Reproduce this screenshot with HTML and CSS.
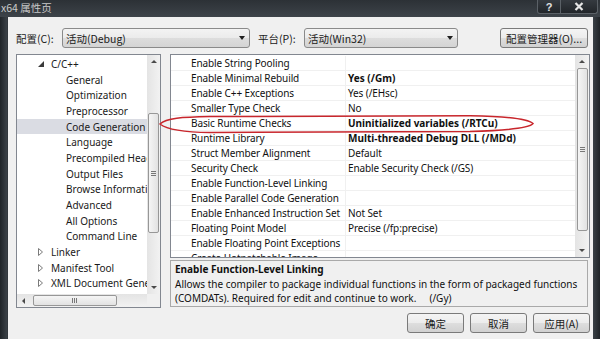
FILE: index.html
```html
<!DOCTYPE html>
<html lang="zh-CN">
<head>
<meta charset="utf-8">
<title>x64 属性页</title>
<link rel="stylesheet" href="styles.css">
</head>
<body>
<div class="frame">
  <div class="titlebar">
    <span class="title">x64 属性页</span>
    <div class="caption-btns">
      <span class="cbtn help">?</span>
      <span class="cbtn close"><svg width="10" height="9" viewBox="0 0 10 9"><path d="M1.5 1 L8.5 8 M8.5 1 L1.5 8" stroke="#e6e6e6" stroke-width="2.2"/></svg></span>
    </div>
  </div>
  <div class="client">
    <div class="toolbar">
      <span class="lbl lbl-config">配置(C):</span>
      <div class="combo combo-config"><span class="combo-text">活动(Debug)</span><i class="drop"></i></div>
      <span class="lbl lbl-platform">平台(P):</span>
      <div class="combo combo-platform"><span class="combo-text">活动(Win32)</span><i class="drop"></i></div>
      <button class="btn btn-manager">配置管理器(O)...</button>
    </div>

    <div class="main">
      <div class="tree">
        <div class="tree-items">
          <div class="node"><span class="twisty"><svg width="6" height="6" viewBox="0 0 6 6"><path d="M6 0 L6 6 L0 6 Z" fill="#3a3a3a"/></svg></span>C/C++</div>
          <div class="node child">General</div>
          <div class="node child">Optimization</div>
          <div class="node child">Preprocessor</div>
          <div class="node child selected">Code Generation</div>
          <div class="node child">Language</div>
          <div class="node child">Precompiled Headers</div>
          <div class="node child">Output Files</div>
          <div class="node child">Browse Information</div>
          <div class="node child">Advanced</div>
          <div class="node child">All Options</div>
          <div class="node child">Command Line</div>
          <div class="node"><span class="twisty"><svg width="5" height="8" viewBox="0 0 5 8"><path d="M0.5 0.5 L4.5 4 L0.5 7.5 Z" fill="none" stroke="#7a7a7a" stroke-width="1"/></svg></span>Linker</div>
          <div class="node"><span class="twisty"><svg width="5" height="8" viewBox="0 0 5 8"><path d="M0.5 0.5 L4.5 4 L0.5 7.5 Z" fill="none" stroke="#7a7a7a" stroke-width="1"/></svg></span>Manifest Tool</div>
          <div class="node"><span class="twisty"><svg width="5" height="8" viewBox="0 0 5 8"><path d="M0.5 0.5 L4.5 4 L0.5 7.5 Z" fill="none" stroke="#7a7a7a" stroke-width="1"/></svg></span>XML Document Generator</div>
        </div>
        <div class="vscroll tree-vscroll">
          <span class="sarrow up"></span>
          <span class="thumb vthumb tree-vthumb"><span class="grip-h"></span></span>
          <span class="sfill"></span>
          <span class="sarrow down"></span>
        </div>
        <div class="hscroll">
          <span class="sarrow left"></span>
          <span class="thumb hthumb"><span class="grip-v"></span></span>
          <span class="sfill"></span>
          <span class="sarrow right"></span>
        </div>
        <div class="corner"></div>
      </div>

      <div class="right">
        <div class="grid">
          <div class="rows">
            <div class="row"><span class="name">Enable String Pooling</span><span class="value"></span></div>
            <div class="row"><span class="name">Enable Minimal Rebuild</span><span class="value bold">Yes (/Gm)</span></div>
            <div class="row"><span class="name">Enable C++ Exceptions</span><span class="value">Yes (/EHsc)</span></div>
            <div class="row"><span class="name">Smaller Type Check</span><span class="value">No</span></div>
            <div class="row"><span class="name">Basic Runtime Checks</span><span class="value bold">Uninitialized variables (/RTCu)</span></div>
            <div class="row"><span class="name">Runtime Library</span><span class="value bold">Multi-threaded Debug DLL (/MDd)</span></div>
            <div class="row"><span class="name">Struct Member Alignment</span><span class="value">Default</span></div>
            <div class="row"><span class="name">Security Check</span><span class="value">Enable Security Check (/GS)</span></div>
            <div class="row"><span class="name">Enable Function-Level Linking</span><span class="value"></span></div>
            <div class="row"><span class="name">Enable Parallel Code Generation</span><span class="value"></span></div>
            <div class="row"><span class="name">Enable Enhanced Instruction Set</span><span class="value">Not Set</span></div>
            <div class="row"><span class="name">Floating Point Model</span><span class="value">Precise (/fp:precise)</span></div>
            <div class="row"><span class="name">Enable Floating Point Exceptions</span><span class="value"></span></div>
            <div class="row"><span class="name">Create Hotpatchable Image</span><span class="value"></span></div>
          </div>
          <div class="vscroll grid-vscroll">
            <span class="sarrow up"></span>
            <span class="thumb vthumb grid-vthumb"><span class="grip-h"></span></span>
            <span class="sfill"></span>
            <span class="sarrow down"></span>
          </div>
        </div>
        <div class="desc">
          <div class="desc-title">Enable Function-Level Linking</div>
          <div class="desc-text">Allows the compiler to package individual functions in the form of packaged functions<br>(COMDATs). Required for edit and continue to work.&nbsp;&nbsp;&nbsp;&nbsp;&nbsp;(/Gy)</div>
        </div>
      </div>
    </div>

    <div class="footer">
      <button class="btn btn-dlg">确定</button>
      <button class="btn btn-dlg">取消</button>
      <button class="btn btn-dlg">应用(A)</button>
    </div>
  </div>
</div>
<svg class="annot" width="600" height="339" viewBox="0 0 600 339">
  <path d="M160 124 C166 118 182 117 210 116.5 L470 115.8 C506 116.3 528 119 533 123.5 C529 128.5 505 130.5 470 131.5 L210 132.5 C184 132.3 167 129.5 160 124 Z" fill="none" stroke="#c8262c" stroke-width="1.5"/>
</svg>
</body>
</html>
```

FILE: styles.css
```css
html, body {
  margin: 0;
  padding: 0;
}
body {
  width: 600px;
  height: 339px;
  overflow: hidden;
  position: relative;
  background: #24292e;
  font-family: "Noto Sans", "Noto Sans CJK SC", sans-serif;
  font-size: 10px;
  color: #111;
}
.frame {
  height: 339px;
  box-sizing: border-box;
  padding: 0 7px 0 8px;
  display: flex;
  flex-direction: column;
  background: linear-gradient(to right, #1f2428 0, #3b4147 7px, #2a2f34 8px, #2a2f34 592px, #3a4046 593px, #1f2327 600px);
}
.titlebar {
  height: 17px;
  margin: 0 -7px 0 -8px;
  display: flex;
  justify-content: space-between;
  align-items: flex-start;
  background: linear-gradient(to bottom, #2c3136, #3d4349);
}
.title {
  padding: 1px 0 0 1px;
  font-family: "Noto Sans CJK SC", sans-serif;
  font-size: 10.5px;
  line-height: 14px;
  color: #c9c9c9;
}
.caption-btns {
  display: flex;
  margin-right: 2px;
}
.cbtn {
  height: 13px;
  display: flex;
  align-items: center;
  justify-content: center;
  border: 1px solid #5b6167;
  border-top: none;
  background: linear-gradient(to bottom, #353a40, #22262a);
  color: #e0e0e0;
  font-family: "Liberation Sans", sans-serif;
  font-weight: bold;
  font-size: 11px;
}
.help {
  width: 22px;
  border-radius: 0 0 0 3px;
}
.close {
  width: 36px;
  border-left: none;
  border-radius: 0 0 3px 0;
}
.client {
  flex: 1;
  min-height: 0;
  background: #f0f0f0;
  padding: 11px 3px 0 8px;
  display: flex;
  flex-direction: column;
}
.toolbar {
  height: 20px;
  display: flex;
  align-items: center;
}
.lbl {
  font-family: "Noto Sans CJK SC", sans-serif;
  font-size: 10.5px;
  color: #1a1a1a;
  width: 46px;
}
.lbl-platform {
  margin-left: 8px;
}
.combo {
  height: 20px;
  box-sizing: border-box;
  border: 1px solid #8a8a8a;
  border-radius: 3px;
  background: linear-gradient(to bottom, #f3f3f3 0, #ebebeb 50%, #dddddd 51%, #d4d4d4 100%);
  display: flex;
  align-items: center;
  justify-content: space-between;
  padding: 0 4px 0 3px;
}
.combo-config { width: 188px; }
.combo-platform { width: 154px; }
.combo-text {
  font-family: "Noto Sans CJK SC", sans-serif;
  font-size: 10.5px;
  color: #1a1a1a;
}
.drop {
  width: 0;
  height: 0;
  border-left: 3.5px solid transparent;
  border-right: 3.5px solid transparent;
  border-top: 4px solid #202020;
}
.btn {
  height: 20px;
  box-sizing: border-box;
  border: 1px solid #7a7a7a;
  border-radius: 3px;
  background: linear-gradient(to bottom, #f4f4f4 0, #ececec 50%, #dedede 51%, #d1d1d1 100%);
  font-family: "Noto Sans CJK SC", sans-serif;
  font-size: 10.5px;
  color: #1a1a1a;
  padding: 0;
  display: flex;
  align-items: center;
  justify-content: center;
}
.btn-manager {
  margin-left: 42px;
  width: 88px;
}
.main {
  margin-top: 6px;
  height: 254px;
  display: flex;
  gap: 9px;
}
.tree {
  width: 145px;
  box-sizing: border-box;
  border: 1px solid #828790;
  background: #fff;
  display: grid;
  grid-template-columns: minmax(0, 1fr) 13px;
  grid-template-rows: minmax(0, 1fr) 13px;
}
.tree-items {
  overflow: hidden;
  padding-top: 1px;
  white-space: nowrap;
}
.node {
  height: 15.7px;
  display: flex;
  align-items: center;
  padding-left: 21px;
  color: #1a1a1a;
}
.node.child {
  padding-left: 49px;
}
.node.selected {
  background: #dadce3;
}
.twisty {
  flex: none;
  width: 13px;
  display: flex;
  align-items: center;
}
.vscroll {
  min-height: 0;
  display: flex;
  flex-direction: column;
  align-items: center;
  background: linear-gradient(to right, #e4e4e4, #f2f2f2);
}
.hscroll {
  min-width: 0;
  display: flex;
  align-items: center;
  background: linear-gradient(to bottom, #e4e4e4, #f2f2f2);
}
.corner {
  background: #f0f0f0;
}
.sarrow {
  flex: none;
  width: 13px;
  height: 13px;
  display: flex;
  align-items: center;
  justify-content: center;
}
.sarrow::after {
  content: "";
  width: 0;
  height: 0;
}
.sarrow.up::after {
  border-left: 3px solid transparent;
  border-right: 3px solid transparent;
  border-bottom: 3px solid #4a4a4a;
}
.sarrow.down::after {
  border-left: 3px solid transparent;
  border-right: 3px solid transparent;
  border-top: 3px solid #4a4a4a;
}
.sarrow.left::after {
  border-top: 3px solid transparent;
  border-bottom: 3px solid transparent;
  border-right: 3px solid #4a4a4a;
}
.sarrow.right::after {
  border-top: 3px solid transparent;
  border-bottom: 3px solid transparent;
  border-left: 3px solid #4a4a4a;
}
.sfill {
  flex: 1;
}
.thumb {
  flex: none;
  box-sizing: border-box;
  border: 1px solid #979797;
  border-radius: 2px;
  display: flex;
  align-items: center;
  justify-content: center;
}
.vthumb {
  width: 11px;
  background: linear-gradient(to right, #f5f5f5, #e2e2e2);
}
.hthumb {
  height: 11px;
  background: linear-gradient(to bottom, #f5f5f5, #e2e2e2);
  margin-left: 3px;
  width: 84px;
}
.tree-vthumb {
  margin-top: 45px;
  height: 120px;
}
.grid-vthumb {
  margin-top: 0;
  height: 163px;
}
.grip-h {
  width: 5px;
  height: 5px;
  background: repeating-linear-gradient(to bottom, #777 0, #777 1px, transparent 1px, transparent 2px);
}
.grip-v {
  width: 6px;
  height: 5px;
  background: repeating-linear-gradient(to right, #777 0, #777 1px, transparent 1px, transparent 2px);
}
.right {
  width: 420px;
  display: flex;
  flex-direction: column;
}
.grid {
  height: 204px;
  box-sizing: border-box;
  border: 1px solid #828790;
  background: #fff;
  display: grid;
  grid-template-columns: minmax(0, 1fr) 14px;
  grid-template-rows: minmax(0, 1fr);
}
.rows {
  overflow: hidden;
  padding-top: 1px;
  letter-spacing: -0.1px;
}
.row {
  height: 15px;
  box-sizing: border-box;
  display: flex;
  align-items: center;
  border-bottom: 1px solid #f0f0f0;
  white-space: nowrap;
}
.name {
  flex: none;
  width: 175px;
  height: 100%;
  box-sizing: border-box;
  padding-left: 20px;
  border-right: 1px solid #f0f0f0;
  display: flex;
  align-items: center;
}
.value {
  padding-left: 2px;
}
.bold {
  font-weight: bold;
  letter-spacing: 0;
}
.desc {
  margin-top: 2px;
  width: 418px;
  height: 47px;
  box-sizing: border-box;
  border: 1px solid #a9a9a9;
  background: #f0f0f0;
  padding: 1px 0 0 4px;
  line-height: 14.5px;
  white-space: nowrap;
}
.desc-title {
  font-weight: bold;
}
.footer {
  margin-top: 5px;
  display: flex;
  justify-content: flex-end;
  gap: 6px;
}
.btn-dlg {
  width: 57px;
}
.annot {
  position: absolute;
  left: 0;
  top: 0;
  pointer-events: none;
}
```
